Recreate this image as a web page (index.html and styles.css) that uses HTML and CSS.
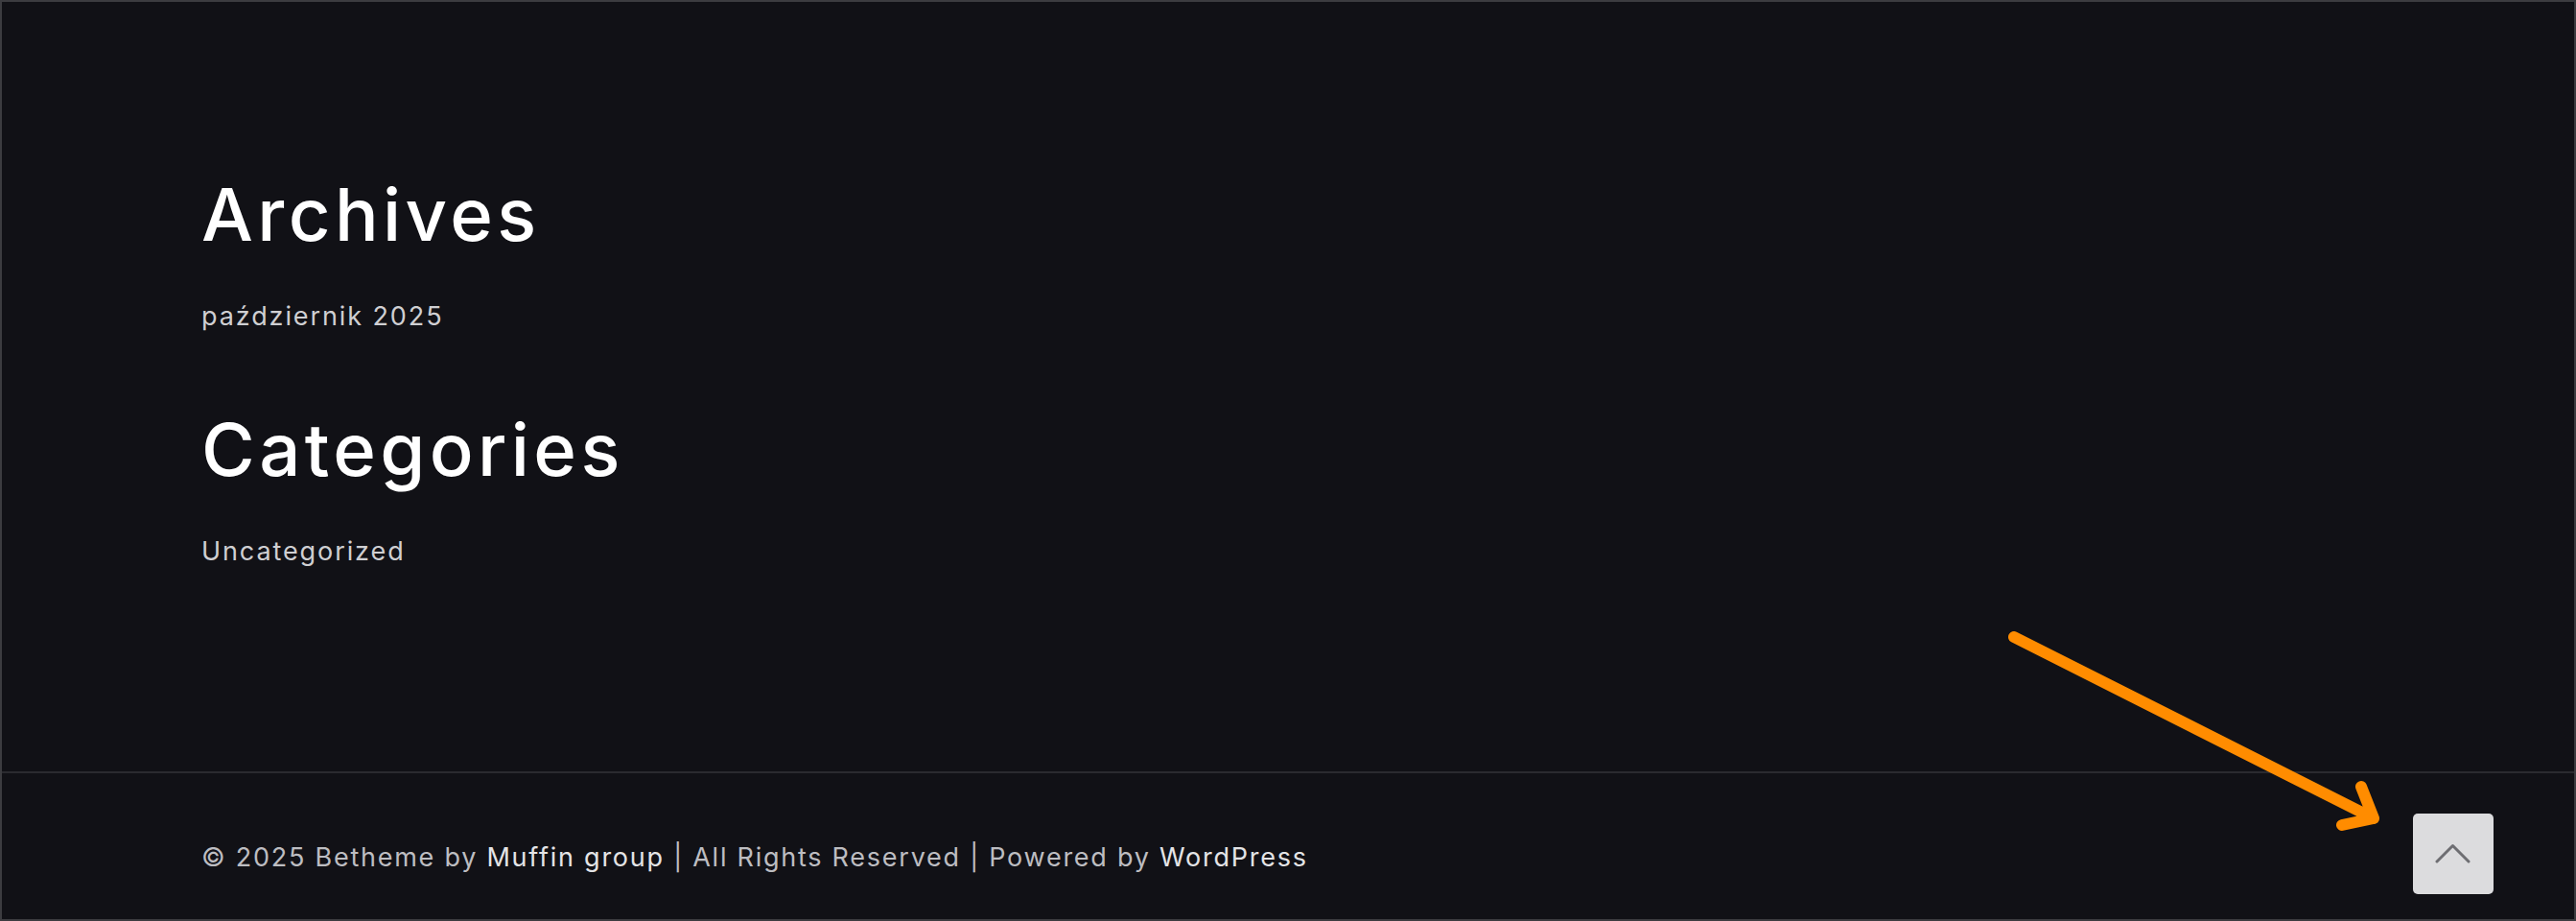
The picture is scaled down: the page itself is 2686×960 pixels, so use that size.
FILE: index.html
```html
<!DOCTYPE html>
<html>
	<head>
		<meta charset="UTF-8">
		<title>Betheme</title>
		<link rel="stylesheet" href="styles.css">
	</head>
	<body>
		<div class="page">
			<div class="sidebar">
				<div class="widget">
					<h2>Archives</h2>
					<ul>
						<li><a href="###">październik 2025</a></li>
					</ul>
				</div>
				<div class="widget">
					<h2>Categories</h2>
					<ul>
						<li><a href="###">Uncategorized</a></li>
					</ul>
				</div>
			</div>
			<div class="footer">
				<div class="copy">
					© 2025 Betheme by <a href="###">Muffin group</a> | All Rights Reserved | Powered by <a href="###">WordPress</a>
				</div>
				<a class="back-top" href="###">
					<svg width="84" height="84" viewBox="0 0 84 84">
						<path d="M25 50 L41.5 33.5 L58 50" fill="none" stroke="#6e6e72" stroke-width="3" stroke-linecap="round" stroke-linejoin="round"/>
					</svg>
				</a>
			</div>
			<!--箭头标注-->
			<svg class="arrow" width="2686" height="960" viewBox="0 0 2686 960">
				<path d="M2098 662 L2473 851 M2460 818 L2473 851 L2440 858" fill="none" stroke="#ff8c00" stroke-width="12" stroke-linecap="round" stroke-linejoin="round"/>
			</svg>
		</div>
	</body>
</html>
```

FILE: styles.css
```css
*{
	margin: 0;
	padding: 0;
	box-sizing: border-box;
}
body{
	background-color: #111116;
	font-family: Inter, "Open Sans", sans-serif;
}
a{
	text-decoration: none;
	color: inherit;
}
ul{
	list-style: none;
}
.page{
	position: relative;
	width: 2686px;
	height: 960px;
	border: 2px solid #3c3c40;
	display: flex;
	flex-direction: column;
	overflow: hidden;
}
.sidebar{
	flex: 1;
	padding: 183px 0 0 208px;
}
.widget h2{
	font-size: 76px;
	line-height: 76px;
	font-weight: 500;
	letter-spacing: 4.4px;
	color: #ffffff;
}
.widget ul{
	margin-top: 49px;
	margin-bottom: 80px;
}
.widget li{
	font-size: 27px;
	line-height: 40px;
	letter-spacing: 1.9px;
	color: #cfcfd2;
}
.footer{
	height: 154px;
	border-top: 2px solid #2a2a2f;
	padding: 42px 84px 0 208px;
	display: flex;
	justify-content: space-between;
	align-items: flex-start;
}
.copy{
	margin-top: 26px;
	font-size: 27px;
	line-height: 40px;
	letter-spacing: 1.75px;
	color: #bdbdc1;
}
.copy a{
	color: #e4e4e6;
}
.back-top{
	display: block;
	width: 84px;
	height: 84px;
	background-color: #dcdcde;
	border-radius: 5px;
}
.back-top svg{
	display: block;
}
/*标注层*/
.arrow{
	position: absolute;
	top: 0;
	left: 0;
	pointer-events: none;
}
```
